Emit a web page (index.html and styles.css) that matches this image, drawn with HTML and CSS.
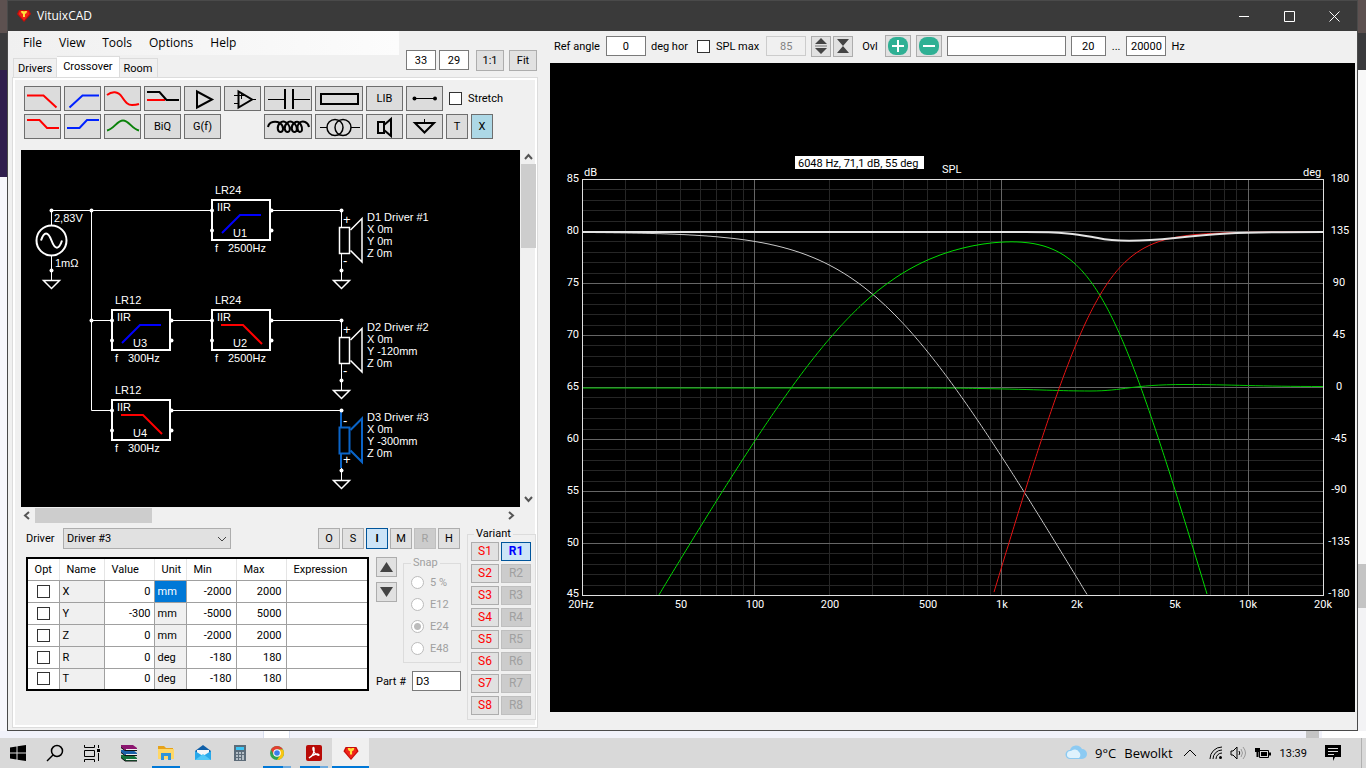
FILE: index.html
```html
<!DOCTYPE html>
<html lang="en">
<head>
  <meta charset="UTF-8" />
  <meta name="viewport" content="width=device-width, initial-scale=1.0" />
  <title>VituixCAD</title>
  <link rel="stylesheet" href="styles.css">
</head>
<body>
  <!-- shared shapes -->
  <svg class="defs" aria-hidden="true">
    <symbol id="gem" viewBox="0 0 14 12">
      <path d="M2 0H12L14 4L7 12L0 4Z" fill="#c80c08"/>
      <path d="M3 1H11L12.500 4L7 10.500L1.500 4Z" fill="#f0241a"/>
      <path d="M4 1H6.500L7 2L7.500 1H10L9.500 3L8 4V7H6V4L4.500 3Z" fill="#ffe23a"/>
    </symbol>
    <g id="ground" fill="none" stroke="#fff" stroke-width="1.500">
      <path d="M-8 0H8L0 8Z"/>
    </g>
    <g id="box">
      <rect x="0" y="0" width="58" height="40" fill="none" stroke="#fff" stroke-width="2"/>
      <g fill="#fff">
        <circle cx="0" cy="10.500" r="2"/><circle cx="0" cy="30.500" r="2"/>
        <circle cx="59.500" cy="10.500" r="2"/><circle cx="59.500" cy="30.500" r="2"/>
      </g>
    </g>
    <path id="highpass" d="M10 33L28 15H49" fill="none" stroke="#00f" stroke-width="2"/>
    <path id="lowpass" d="M9 15H31L50 34" fill="none" stroke="#f00" stroke-width="2"/>
    <g id="speaker" fill="none">
      <rect x="-2" y="17.500" width="10" height="26"/>
      <path d="M9 20L20.500 8.500V52L9 40.500"/>
    </g>
  </svg>

  <div class="desktop">
    <div class="edge edge-left"></div>
    <div class="window">
      <header class="titlebar">
        <svg class="app-icon"><use href="#gem"/></svg>
        <h1>VituixCAD</h1>
        <div class="caption-buttons">
          <button aria-label="Minimize"><svg width="11" height="11"><path d="M0 5.500H10"/></svg></button>
          <button aria-label="Maximize"><svg width="11" height="11"><path d="M.5 .5H10.500V10.500H.5Z"/></svg></button>
          <button aria-label="Close"><svg width="11" height="11"><path d="M.5 .5L10.500 10.500M10.500 .5L.5 10.500"/></svg></button>
        </div>
      </header>

      <div class="client">
        <section class="left">
          <nav class="menu">
            <a href="#">File</a><a href="#">View</a><a href="#">Tools</a><a href="#">Options</a><a href="#">Help</a>
          </nav>
          <div class="tab-row">
            <div class="tabs">
              <button>Drivers</button><button class="current">Crossover</button><button>Room</button>
            </div>
            <div class="grid-size">
              <input type="text" class="field center w30" value="33" aria-label="Columns">
              <input type="text" class="field center w30" value="29" aria-label="Rows">
              <button class="btn zoom">1:1</button>
              <button class="btn">Fit</button>
            </div>
          </div>

          <div class="panel">
            <div class="parts">
              <button aria-label="Low pass"><svg viewBox="0 0 35 23"><path stroke="#f00" d="M2 8.500H18.500L31.500 20.500"/></svg></button>
              <button aria-label="High pass"><svg viewBox="0 0 35 23"><path stroke="#02f" d="M4.500 20.500L17.500 8.500H34"/></svg></button>
              <button aria-label="Shelf"><svg viewBox="0 0 35 23"><path stroke="#f00" d="M2 8C7 4 13 4 17 10S23 18 27 18 31 18 34 17"/></svg></button>
              <button aria-label="Shelving low"><svg viewBox="0 0 35 23"><path stroke="#f00" d="M2 13H20"/><path d="M2 5H14.500L21.500 13H34"/></svg></button>
              <button aria-label="Buffer"><svg viewBox="0 0 35 23"><path d="M12 4.500V20.500L27 12.500Z"/></svg></button>
              <button aria-label="Op amp"><svg viewBox="0 0 35 23"><path d="M13.500 4.500V20.500L27 12.500Z"/><path class="thin" d="M9 8.500H19M9 16.500H14M27 12.500H31M16.500 6V12"/></svg></button>
              <button aria-label="Capacitor"><svg viewBox="0 0 46 23"><path d="M20 2V22M28 2V22"/><path class="thin" d="M3 12.500H20M28 12.500H45"/></svg></button>
              <button aria-label="Resistor"><svg viewBox="0 0 46 23"><path d="M5 7H42V17H5Z"/></svg></button>
              <button>LIB</button>
              <button aria-label="Wire"><svg viewBox="0 0 35 23"><path class="thin" d="M7 11.500H28"/><circle class="dot" cx="7.500" cy="11.500" r="2"/><circle class="dot" cx="28" cy="11.500" r="2"/></svg></button>
              <label class="check stretch"><input type="checkbox"> Stretch</label>

              <button aria-label="Low shelf"><svg viewBox="0 0 35 23"><path stroke="#f00" d="M2 5H14.500L22 13H34"/></svg></button>
              <button aria-label="High shelf"><svg viewBox="0 0 35 23"><path stroke="#02f" d="M2 13H14.500L22 5H34"/></svg></button>
              <button aria-label="Peak"><svg viewBox="0 0 35 23"><path stroke="#0a820a" d="M2 15.500C9 14 12 5.500 18 5.500S27 14 34 15.500"/></svg></button>
              <button>BiQ</button>
              <button>G(f)</button>
              <span></span>
              <button aria-label="Inductor"><svg viewBox="0 0 46 23"><path d="M3 12C4 6 11 6 15 8C20 12 18 17 15.500 17S11 12 15 8C18 5 21 7 23 9C26 13 25 17 22.500 17S18 12 22 8C25 5 28 7 30 9C33 13 32 17 29.500 17S25 12 29 8C33 5 35 8 36 10C38 14 37 17 35 17S31 12 34 8C38 5 43 7 44 12"/></svg></button>
              <button aria-label="Transformer"><svg viewBox="0 0 46 23"><g class="mid"><circle cx="19" cy="12.500" r="8"/><circle cx="27" cy="12.500" r="8"/></g><path class="thin" d="M4 12.500H11M35 12.500H44"/></svg></button>
              <button aria-label="Driver"><svg viewBox="0 0 35 23"><path d="M11 7H17V18H11ZM17 10L24 4V21L17 15"/></svg></button>
              <button aria-label="Ground"><svg viewBox="0 0 35 23"><path d="M8 8H27L17.500 17.500Z"/><path class="thin" d="M17.500 4V8"/></svg></button>
              <div class="pair"><button>T</button><button class="on">X</button></div>
            </div>

            <div class="scroller">
              <svg class="schematic" viewBox="21 150 499 357" preserveAspectRatio="xMinYMin slice">
                <g fill="none" stroke="#fff">
                  <path d="M51.500 225V210.500H212M91.500 210.500V410.500H112M91.500 320.500H112M171 320.500H212M271 210.500H341.500V227M271 320.500H341.500V337M171 410.500H341.500"/>
                  <path d="M51.500 256V280M341.500 254V280M341.500 364V390M341.500 465V480"/>
                </g>
                <g fill="none" stroke="#fff" stroke-width="2">
                  <circle cx="51.500" cy="240.500" r="15"/>
                  <path d="M41 240.500C44 231 48 231 51.500 240.500S59 250 62 240.500"/>
                </g>
                <g stroke="#fff" stroke-width="1.500">
                  <use href="#speaker" x="341.500" y="210"/>
                  <use href="#speaker" x="341.500" y="320"/>
                </g>
                <g fill="none" stroke="#0a64c8" stroke-width="2">
                  <path d="M341 412V427M341 454V468"/>
                  <use href="#speaker" x="341.500" y="410"/>
                </g>
                <use href="#ground" x="51.500" y="280.500"/>
                <use href="#ground" x="341.500" y="280.500"/>
                <use href="#ground" x="341.500" y="390.500"/>
                <use href="#ground" x="341.500" y="480.500"/>
                <g fill="#fff">
                  <circle cx="51.500" cy="210.500" r="2"/><circle cx="91.500" cy="210.500" r="2"/>
                  <circle cx="91.500" cy="320.500" r="2"/><circle cx="51.500" cy="270.500" r="2"/>
                  <circle cx="341.500" cy="210.500" r="2"/><circle cx="341.500" cy="270.500" r="2"/>
                  <circle cx="341.500" cy="320.500" r="2"/><circle cx="341.500" cy="380.500" r="2"/>
                  <circle cx="341.500" cy="410.500" r="2"/><circle cx="341.500" cy="470.500" r="2"/>
                </g>
                <use href="#box" x="212" y="200"/><use href="#highpass" x="212" y="200"/>
                <use href="#box" x="112" y="310"/><use href="#highpass" x="112" y="310"/>
                <use href="#box" x="212" y="310"/><use href="#lowpass" x="212" y="310"/>
                <use href="#box" x="112" y="400"/><use href="#lowpass" x="112" y="400"/>
                <g class="part-text">
                  <text x="54" y="222">2,83V</text><text x="55" y="267">1mΩ</text>
                  <text x="215" y="194">LR24</text><text x="217" y="211">IIR</text><text x="233" y="237">U1</text><text x="215" y="252">f</text><text x="228" y="252">2500Hz</text>
                  <text x="115" y="304">LR12</text><text x="117" y="321">IIR</text><text x="133" y="347">U3</text><text x="115" y="362">f</text><text x="128" y="362">300Hz</text>
                  <text x="215" y="304">LR24</text><text x="217" y="321">IIR</text><text x="233" y="347">U2</text><text x="215" y="362">f</text><text x="228" y="362">2500Hz</text>
                  <text x="115" y="394">LR12</text><text x="117" y="411">IIR</text><text x="133" y="437">U4</text><text x="115" y="452">f</text><text x="128" y="452">300Hz</text>
                  <text x="343" y="224" class="sign">+</text><text x="343" y="265" class="sign">-</text>
                  <text x="343" y="334" class="sign">+</text><text x="343" y="375" class="sign">-</text>
                  <text x="343" y="425" class="sign">-</text><text x="343" y="464" class="sign">+</text>
                  <text x="367" y="221">D1 Driver #1</text><text x="367" y="233">X 0m</text><text x="367" y="245">Y 0m</text><text x="367" y="257">Z 0m</text>
                  <text x="367" y="331">D2 Driver #2</text><text x="367" y="343">X 0m</text><text x="367" y="355">Y -120mm</text><text x="367" y="367">Z 0m</text>
                  <text x="367" y="421">D3 Driver #3</text><text x="367" y="433">X 0m</text><text x="367" y="445">Y -300mm</text><text x="367" y="457">Z 0m</text>
                </g>
              </svg>
              <div class="bar vertical">
                <svg width="15" height="14"><path d="M4 9L7.500 5L11 9"/></svg>
                <i></i>
                <svg width="15" height="15"><path d="M4 5L7.500 9L11 5"/></svg>
              </div>
              <div class="bar horizontal">
                <svg width="13" height="15"><path d="M8 4L4 7.500L8 11"/></svg>
                <i></i>
                <svg width="15" height="15"><path d="M4 4L8 7.500L4 11"/></svg>
              </div>
            </div>

            <div class="details">
              <div class="editor">
                <div class="driver-row">
                  <label for="driver">Driver</label>
                  <span class="combo">
                    <select id="driver"><option>Driver #3</option></select>
                    <svg width="10" height="6"><path d="M1 1L5 5L9 1"/></svg>
                  </span>
                  <div class="modes">
                    <button class="btn">O</button><button class="btn">S</button><button class="btn active">I</button><button class="btn">M</button><button class="btn" disabled>R</button><button class="btn">H</button>
                  </div>
                </div>
                <div class="editor-body">
                  <table>
                    <colgroup><col class="c-opt"><col class="c-name"><col class="c-value"><col class="c-unit"><col class="c-min"><col class="c-max"><col></colgroup>
                    <thead>
                      <tr><th>Opt</th><th>Name</th><th>Value</th><th>Unit</th><th>Min</th><th>Max</th><th>Expression</th></tr>
                    </thead>
                    <tbody>
                      <tr><td><input type="checkbox" aria-label="Optimize X"></td><td>X</td><td>0</td><td class="selected">mm</td><td>-2000</td><td>2000</td><td></td></tr>
                      <tr><td><input type="checkbox" aria-label="Optimize Y"></td><td>Y</td><td>-300</td><td>mm</td><td>-5000</td><td>5000</td><td></td></tr>
                      <tr><td><input type="checkbox" aria-label="Optimize Z"></td><td>Z</td><td>0</td><td>mm</td><td>-2000</td><td>2000</td><td></td></tr>
                      <tr><td><input type="checkbox" aria-label="Optimize R"></td><td>R</td><td>0</td><td>deg</td><td>-180</td><td>180</td><td></td></tr>
                      <tr><td><input type="checkbox" aria-label="Optimize T"></td><td>T</td><td>0</td><td>deg</td><td>-180</td><td>180</td><td></td></tr>
                    </tbody>
                  </table>
                  <div class="side">
                    <div class="side-top">
                      <div class="arrows">
                        <button class="btn" aria-label="Increase"><svg width="15" height="12"><path d="M7.500 1L14 11H1Z"/></svg></button>
                        <button class="btn" aria-label="Decrease"><svg width="15" height="12"><path d="M1 1H14L7.500 11Z"/></svg></button>
                      </div>
                      <fieldset class="snap" disabled>
                        <legend>Snap</legend>
                        <label><input type="radio" name="snap"> 5 %</label>
                        <label><input type="radio" name="snap"> E12</label>
                        <label><input type="radio" name="snap" checked> E24</label>
                        <label><input type="radio" name="snap"> E48</label>
                      </fieldset>
                    </div>
                    <div class="part-row">
                      <label for="part">Part #</label>
                      <input type="text" class="field" id="part" value="D3">
                    </div>
                  </div>
                </div>
              </div>
              <fieldset class="variant">
                <legend>Variant</legend>
                <div class="variant-grid">
                  <button class="btn">S1</button><button class="btn active">R1</button>
                  <button class="btn">S2</button><button class="btn" disabled>R2</button>
                  <button class="btn">S3</button><button class="btn" disabled>R3</button>
                  <button class="btn">S4</button><button class="btn" disabled>R4</button>
                  <button class="btn">S5</button><button class="btn" disabled>R5</button>
                  <button class="btn">S6</button><button class="btn" disabled>R6</button>
                  <button class="btn">S7</button><button class="btn" disabled>R7</button>
                  <button class="btn">S8</button><button class="btn" disabled>R8</button>
                </div>
              </fieldset>
            </div>
          </div>
        </section>

        <section class="right">
          <div class="chart-tools">
            <label for="angle">Ref angle</label>
            <input type="text" class="field center w40" id="angle" value="0">
            <span class="unit">deg hor</span>
            <label class="check"><input type="checkbox"> SPL max</label>
            <input type="text" class="field center w40 spl" value="85" aria-label="SPL max" disabled>
            <button class="btn spin" aria-label="Expand"><svg width="14" height="16"><path d="M7 0L13 6H1ZM1 10H13L7 16Z"/><path d="M1 7h12v2H1Z" opacity=".35"/></svg></button>
            <button class="btn spin" aria-label="Compress"><svg width="14" height="16"><path d="M1 1H13L7 8L13 15H1L7 8Z"/></svg></button>
            <label class="ovl" for="overlay">Ovl</label>
            <button class="btn round" aria-label="Add overlay"><svg width="20" height="20"><rect width="20" height="18" y="1" rx="8"/><path d="M10 4V16M4 10H16"/></svg></button>
            <button class="btn round" aria-label="Remove overlay"><svg width="20" height="20"><rect width="20" height="18" y="1" rx="8"/><path d="M4 10H16"/></svg></button>
            <input type="text" class="field overlay" id="overlay">
            <input type="text" class="field center from" value="20" aria-label="From">
            <span class="dots">...</span>
            <input type="text" class="field center w40" id="to" value="20000">
            <label for="to">Hz</label>
          </div>

          <svg class="chart" viewBox="0 0 805 649">
            <g id="grid"></g>
            <g id="curves" fill="none">
              <path stroke="#00c800" d="M33 325H350C390 325 410 325 430 325.500C490 326.500 510 328 540 328C575 328 580 321.500 635 321.500C680 321.500 710 323.500 773 323.500"/>
            </g>
            <path fill="none" stroke="#e4e4e4" stroke-width="2" d="M33 169H475C520 169 530 172 548 175C566 179 595 178 625 175C660 171 680 169 773 169"/>
            <rect x="245" y="93" width="129" height="13" fill="#fff"/>
            <text x="248" y="104" class="tip">6048 Hz, 71,1 dB, 55 deg</text>
            <g class="chart-text">
              <text x="392" y="110">SPL</text><text x="34" y="113">dB</text><text x="753" y="113">deg</text>
            </g>
            <g class="chart-text end">
              <text x="29" y="119">85</text><text x="29" y="171">80</text><text x="29" y="223">75</text>
              <text x="29" y="275">70</text><text x="29" y="327">65</text><text x="29" y="379">60</text>
              <text x="29" y="431">55</text><text x="29" y="483">50</text><text x="29" y="534">45</text>
            </g>
            <g class="chart-text middle">
              <text x="790" y="119">180</text><text x="790" y="171">135</text><text x="789" y="223">90</text>
              <text x="789" y="275">45</text><text x="789" y="327">0</text><text x="789" y="379">-45</text>
              <text x="789" y="430">-90</text><text x="789" y="482">-135</text><text x="789" y="534">-180</text>
              <text x="31" y="545">20Hz</text><text x="131" y="545">50</text><text x="205" y="545">100</text>
              <text x="280" y="545">200</text><text x="378" y="545">500</text><text x="452" y="545">1k</text>
              <text x="527" y="545">2k</text><text x="625" y="545">5k</text><text x="698" y="545">10k</text>
              <text x="773" y="545">20k</text>
            </g>
          </svg>
        </section>
      </div>
    </div>
    <div class="edge edge-right"></div>
  </div>
  <div class="edge-bottom"><span></span><i></i><b></b></div>

  <footer class="taskbar">
    <div class="apps">
      <button aria-label="Start"><svg width="18" height="18"><path d="M1 3.500L7.500 2.500V8.500H1ZM8.500 2.300L17 1V8.500H8.500ZM1 9.500H7.500V15.500L1 14.500ZM8.500 9.500H17V17L8.500 15.700Z"/></svg></button>
      <button aria-label="Search"><svg width="18" height="18" fill="none" stroke="#000" stroke-width="1.500"><circle cx="11" cy="7" r="5.500"/><path d="M7 11L1 17"/></svg></button>
      <button aria-label="Task view"><svg width="18" height="18" fill="none" stroke="#000"><path d="M1.500 1V3.500H11.500V1M1.500 6.500H11.500V12.500H1.500ZM1.500 18V15.500H11.500V18M15.500 1V4M15.500 9V17"/><path d="M14 6.500H17" stroke-width="3"/></svg></button>
      <button aria-label="WinRAR"><svg width="18" height="18"><path d="M1 1L13 1L17 4V6L5 6L1 4Z" fill="#8c1670"/><path d="M1 6L13 6L17 9V11L5 11L1 9Z" fill="#1a62a8"/><path d="M1 11L13 11L17 14V17H5L1 14Z" fill="#14733c"/><path d="M6 5.500H17M6 10.500H17M6 15.500H17" stroke="#eee"/><path d="M1 3.500L5 6.500H17M1 8.500L5 11.500H17M1 13.500L5 17H17" fill="none" stroke="#111"/></svg></button>
      <button class="open" aria-label="File Explorer"><svg width="18" height="18"><path d="M1 2H7L9 4H16V15H1Z" fill="#e6a21a"/><path d="M1 5H17V15H1Z" fill="#ffd766"/><path d="M4 16V9H14V16H11V12H7V16Z" fill="#2f94dc"/></svg></button>
      <button aria-label="Mail"><svg width="18" height="18"><path d="M1 7L9 1L17 7V16H1Z" fill="#0f5fa8"/><path d="M3 6H15V11H3Z" fill="#f4f6f8"/><path d="M1 7L9 12L17 7V16H1Z" fill="#28a8ea"/><path d="M1 16L9 10L17 16Z" fill="#50c8f8"/></svg></button>
      <button aria-label="Calculator"><svg width="18" height="18"><path d="M3 1H15V17H3Z" fill="#5c6b78"/><path d="M5 3H13V6H5Z" fill="#3cc4f4"/><path d="M5 8h2v2H5zM8 8h2v2H8zM11 8h2v2h-2zM5 11h2v2H5zM8 11h2v2H8zM11 11h2v5h-2zM5 14h2v2H5zM8 14h2v2H8z" fill="#b4bec6"/></svg></button>
      <button class="open multi" aria-label="Chrome"><svg width="18" height="18"><circle cx="9" cy="9" r="7" fill="#30a350"/><path d="M3 5.500A7 7 0 0 1 15 5.500H9L5.800 11Z" fill="#e23f31"/><path d="M15 5.500A7 7 0 0 1 9 16L12.200 11L11 5.500Z" fill="#fbc510"/><circle cx="9" cy="9" r="3.800" fill="#fff"/><circle cx="9" cy="9" r="2.800" fill="#3b7fea"/></svg></button>
      <button class="open multi" aria-label="Acrobat"><svg width="18" height="18"><rect x="1" y="1" width="16" height="16" rx="2" fill="#b80a06"/><path d="M4 14C7 13 10 8 9 4C8 2 7 5 9 8S14 12 14 11C14 9 8 10 4 14Z" fill="none" stroke="#fff" stroke-width="1.300"/></svg></button>
      <button class="open current" aria-label="VituixCAD"><svg width="16" height="13"><use href="#gem"/></svg></button>
    </div>
    <div class="tray">
      <svg class="cloud" width="22" height="18"><path d="M5 15A4.500 4.500 0 0 1 5 6A6.500 6.500 0 0 1 17 5A5 5 0 0 1 17 15Z" fill="#8ccaf2"/><path d="M5 14A3.500 3.500 0 0 1 6 7A5 5 0 0 1 14 8A4 4 0 0 1 14 14Z" fill="#dff2fd"/></svg>
      <span class="weather">9°C</span><span class="weather">Bewolkt</span>
      <svg class="caret" width="14" height="8"><path d="M1 7L7 1L13 7"/></svg>
      <svg class="wifi" width="14" height="14"><path d="M1 13A12 12 0 0 1 13 1M4 13A9 9 0 0 1 13 4M7 13A6 6 0 0 1 13 7"/><circle cx="11.500" cy="11.500" r="1.500" fill="#000"/></svg>
      <svg class="volume" width="17" height="14"><path d="M1 5H3L7 1V13L3 9H1ZM9 5Q10.500 7 9 9"/><path class="faint" d="M11 3Q14 7 11 11M13 1Q18 7 13 13"/></svg>
      <svg class="battery" width="17" height="14"><path d="M5.500 4.500H14.500V11.500H5.500Z"/><path class="solid" d="M7 6H13V10H7ZM15 6.500H17V9.500H15ZM1 2H6V6H4.500V11H2.500V6H1Z"/></svg>
      <time>13:39</time>
      <svg class="notice" width="16" height="16"><path d="M0 0H16V12H10L8 16V12H0Z"/><path d="M3 3.500H13M3 6.500H13M3 9.500H9" stroke="#ddd"/></svg>
    </div>
  </footer>
  <script src="chart.js"></script>
</body>
</html>
```
FILE: styles.css
```css
* {
  box-sizing: border-box;
}

:root {
  --face: #f0f0f0;
  --line: #dcdcdc;
  --btn: #e1e1e1;
  --btn-line: #adadad;
  --field-line: #7a7a7a;
  --accent: #0078d7;
}

body {
  margin: 0;
  height: 100vh;
  display: flex;
  flex-direction: column;
  overflow: hidden;
  background: #f4f5fb;
  color: #000;
  font-family: Roboto, "Liberation Sans", sans-serif;
  font-size: 11px;
  line-height: 13px;
}

button, input, select {
  font: inherit;
  color: inherit;
  margin: 0;
  padding: 0;
  border-radius: 0;
}

button {
  display: flex;
  align-items: center;
  justify-content: center;
}

svg {
  display: block;
  flex: none;
}

.defs {
  position: absolute;
  width: 0;
  height: 0;
}

/* what shows around the window */
.desktop {
  flex: 1;
  min-height: 0;
  display: flex;
}

.edge {
  width: 8px;
  background: linear-gradient(#5d5150 33px, #3a3a3c 33px 70px, #301e4e 70px 177px, #f7f7fc 177px);
}

.edge-left {
  width: 7px;
}

.edge-right {
  background: linear-gradient(#5d5150 33px, #3a3a3c 33px 70px, #f8f8f8 70px 564px, #c4c4c4 564px 608px, #f3f3f5 608px);
}

.edge-bottom {
  height: 7px;
  display: flex;
  background: #f1f2fa;
}

.edge-bottom span {
  width: 27px;
  margin-left: 263px;
  background: #fff;
  border: solid #d8deee;
  border-width: 0 1px;
}

.edge-bottom i {
  width: 13px;
  margin-left: auto;
  background: #c4c4c4;
}

.edge-bottom b {
  width: 44px;
  margin-left: 3px;
  background: #fff;
}

.window {
  flex: 1;
  display: flex;
  flex-direction: column;
  min-width: 0;
  border: 1px solid #4a4a4a;
  background: var(--face);
}

.titlebar {
  height: 30px;
  display: flex;
  align-items: center;
  padding-left: 9px;
  background: #3a3a3a;
  color: #fff;
}

.app-icon {
  width: 14px;
  height: 12px;
}

h1 {
  margin: 0 auto 0 6px;
  font: 12px/16px "Open Sans", sans-serif;
}

.caption-buttons {
  display: flex;
  align-self: stretch;
}

.caption-buttons button {
  width: 45px;
  border: 0;
  background: none;
}

.caption-buttons path {
  fill: none;
  stroke: #fff;
}

.client {
  flex: 1;
  min-height: 0;
  display: grid;
  grid-template-columns: 542px minmax(0, 1fr);
}

/* left side */
.left {
  display: flex;
  flex-direction: column;
  min-height: 0;
  padding: 0 12px 2px 4px;
}

.menu {
  height: 24px;
  width: 390px;
  margin-left: -3px;
  padding-left: 14px;
  display: flex;
  align-items: center;
  gap: 17px;
  background: linear-gradient(to right, var(--face), #fcfcfc);
  font: 12px/16px "Open Sans", sans-serif;
}

.menu a {
  color: #000;
  text-decoration: none;
}

.tab-row {
  height: 22px;
  display: flex;
  justify-content: space-between;
  align-items: flex-end;
}

.tabs {
  display: flex;
  align-items: flex-end;
  padding-left: 1px;
}

.tabs button {
  height: 19px;
  padding: 0 4px;
  border: 1px solid var(--line);
  border-width: 1px 1px 0 0;
  background: var(--face);
}

.tabs button:first-child {
  border-left-width: 1px;
}

.tabs .current {
  height: 21px;
  padding: 0 6px 2px;
  background: #fff;
}

.grid-size {
  display: flex;
  align-items: center;
  gap: 3px;
  height: 22px;
  margin: 0 1px 6px 0;
}

.grid-size .btn {
  width: 28px;
  height: 21px;
  margin-left: 2px;
}

.grid-size .zoom {
  margin-left: 4px;
}

.field {
  height: 20px;
  padding: 0 3px;
  border: 1px solid var(--field-line);
  background: #fff;
}

.field:disabled {
  border-color: #ccc;
  background: var(--face);
  color: #838383;
}

.center {
  text-align: center;
}

.w30 {
  width: 30px;
}

.w40 {
  width: 40px;
}

.btn {
  border: 1px solid var(--btn-line);
  background: var(--btn);
}

.btn:disabled {
  border-color: #bfbfbf;
  background: #ccc;
  color: #a0a0a0;
}

.btn.active {
  border-color: #00559b;
  background: #cce4f7;
  font-weight: bold;
}

.panel {
  flex: 1;
  min-height: 0;
  display: flex;
  flex-direction: column;
  border: 1px solid var(--line);
  box-shadow: inset 0 0 0 2px #fff;
  padding: 8px 1px 2px 8px;
}

.parts {
  display: grid;
  grid-template-columns: repeat(6, 37px) 48px 48px 37px 37px 1fr;
  grid-auto-rows: 25px;
  gap: 3px;
  padding: 0 0 11px 3px;
}

.parts button {
  border: 1px solid #6e6e6e;
  background: #dcdcdc;
}

.parts svg {
  height: 23px;
  fill: none;
  stroke: #000;
  stroke-width: 2;
}

.parts .thin {
  stroke-width: 1;
}

.parts .mid {
  stroke-width: 1.5;
}

.parts .dot {
  fill: #000;
  stroke: none;
}

.parts .pair {
  display: flex;
  gap: 3px;
}

.pair button {
  width: 22px;
}

.parts .on {
  background: #add8e6;
}

.check {
  display: flex;
  align-items: center;
  gap: 6px;
}

.stretch {
  padding-left: 3px;
}

input[type="checkbox"] {
  appearance: none;
  width: 13px;
  height: 13px;
  border: 1px solid #333;
  background: #fff;
}

/* schematic with its scroll bars */
.scroller {
  flex: 1;
  min-height: 0;
  display: grid;
  grid-template: minmax(0, 1fr) 16px / minmax(0, 1fr) 16px;
}

.schematic {
  width: 100%;
  height: 100%;
  background: #000;
}

.part-text {
  fill: #fff;
  font: 11px "Liberation Sans", Arial, sans-serif;
}

.sign {
  font-size: 13px;
}

.bar {
  display: flex;
}

.bar path {
  fill: none;
  stroke: #555;
  stroke-width: 2;
}

.bar i {
  background: #cdcdcd;
}

.vertical {
  flex-direction: column;
  padding-left: 1px;
}

.vertical i {
  height: 84px;
  margin-bottom: auto;
}

.horizontal {
  padding-top: 1px;
}

.horizontal i {
  width: 117px;
  margin: 0 auto 0 1px;
}

.details {
  display: flex;
  justify-content: space-between;
  align-items: flex-start;
  padding: 5px 0 5px 5px;
}

.driver-row {
  display: flex;
  align-items: center;
  height: 21px;
}

.driver-row label {
  width: 37px;
}

.combo {
  display: grid;
  align-items: center;
}

.combo > * {
  grid-area: 1 / 1;
}

.combo select {
  appearance: none;
  width: 168px;
  height: 21px;
  padding: 0 3px;
  border: 1px solid var(--btn-line);
  background: var(--btn);
}

.combo svg {
  justify-self: end;
  margin-right: 4px;
  fill: none;
  stroke: #444;
  pointer-events: none;
}

.modes {
  display: flex;
  gap: 2px;
  margin: 0 1px 0 auto;
}

.modes .btn {
  width: 22px;
  height: 21px;
}

.editor-body {
  display: flex;
  gap: 7px;
  margin-top: 8px;
}

table {
  width: 343px;
  table-layout: fixed;
  border-collapse: collapse;
  border: 2px solid #000;
  background: #fff;
}

.c-opt { width: 32px; }
.c-name { width: 45px; }
.c-value { width: 50px; }
.c-unit { width: 32px; }
.c-min { width: 50px; }
.c-max { width: 50px; }

th, td {
  height: 22px;
  padding: 0 3px;
  border: 1px solid #a0a0a0;
  font-weight: normal;
  text-align: right;
}

th {
  border-color: #e5e5e5;
  border-bottom-color: #a0a0a0;
  padding: 0 7px;
  text-align: left;
}

th:first-child,
td:first-child {
  text-align: center;
  padding: 0;
}

th:nth-child(5),
th:nth-child(6),
td:nth-child(5),
td:nth-child(6) {
  padding-right: 4px;
}

td:nth-child(2),
td:nth-child(4) {
  background: var(--face);
  text-align: left;
}

td input {
  display: block;
  margin: 0 auto;
}

td.selected:nth-child(4) {
  background: var(--accent);
  color: #fff;
}

.side {
  display: flex;
  flex-direction: column;
  justify-content: space-between;
}

.side-top {
  display: flex;
  gap: 6px;
}

.arrows {
  display: flex;
  flex-direction: column;
  gap: 5px;
}

.arrows .btn {
  width: 21px;
  height: 20px;
}

.arrows path,
.spin path {
  fill: #444;
}

fieldset {
  margin: 0;
  min-width: 0;
  border: 1px solid var(--line);
}

legend {
  padding: 0 2px;
  line-height: 12px;
}

.snap {
  width: 58px;
  padding: 2px 3px 3px 7px;
  color: #a0a0a0;
}

.snap label {
  display: flex;
  align-items: center;
  gap: 6px;
  height: 22px;
}

input[type="radio"] {
  appearance: none;
  width: 13px;
  height: 13px;
  border: 1px solid #bcbcbc;
  border-radius: 50%;
  background: #fff;
}

input[type="radio"]:checked {
  background: radial-gradient(#bcbcbc 3px, #fff 4px);
}

.part-row {
  display: flex;
  align-items: center;
  justify-content: space-between;
}

.part-row .field {
  width: 49px;
}

.variant {
  width: 69px;
  padding: 2px 4px 4px 3px;
}

.variant legend {
  margin-left: 3px;
}

.variant-grid {
  display: grid;
  grid-template-columns: 28px 30px;
  grid-auto-rows: 19px;
  gap: 3px 2px;
}

.variant-grid .btn {
  font-size: 12px;
}

.variant-grid .btn:nth-child(odd) {
  color: #f00;
}

.variant-grid .active {
  color: #00f;
}

/* right side */
.right {
  display: flex;
  flex-direction: column;
  min-width: 0;
  min-height: 0;
  padding: 0 2px 18px 0;
}

.chart-tools {
  height: 32px;
  display: flex;
  align-items: center;
  gap: 5px;
  padding: 0 0 2px 4px;
}

.chart-tools label,
.chart-tools span {
  white-space: nowrap;
}

#angle {
  margin-left: 1px;
}

.unit {
  margin-right: 4px;
}

.chart-tools .spl {
  margin-left: 2px;
}

.spin {
  width: 20px;
  height: 21px;
  margin-right: -3px;
}

.chart-tools .ovl {
  margin: 0 2px 0 7px;
}

.round {
  width: 26px;
  height: 22px;
}

.round rect {
  fill: #2fb094;
}

.round path {
  stroke: #fff;
  stroke-width: 2;
}

.overlay {
  width: 119px;
}

.from {
  width: 35px;
}

.dots {
  margin: 0 1px;
}

.chart {
  flex: 1;
  min-height: 0;
  width: 100%;
  background: #000;
}

.chart-text {
  fill: #fff;
}

.tip {
  fill: #000;
}

.end {
  text-anchor: end;
}

.middle {
  text-anchor: middle;
}

.minor {
  stroke: #262626;
}

.major {
  stroke: #666;
}

.frame {
  fill: none;
  stroke: #e0e0e0;
}

/* taskbar */
.taskbar {
  height: 30px;
  display: flex;
  justify-content: space-between;
  background: #d9d9d9;
}

.apps,
.tray {
  display: flex;
  align-items: center;
}

.apps button {
  width: 37px;
  height: 30px;
  border: 0;
  background: none;
}

.apps button:first-child {
  width: 36px;
}

.apps .open {
  background: linear-gradient(var(--accent), var(--accent)) center bottom / 28px 2px no-repeat;
}

.apps .multi {
  background-image: linear-gradient(to right, var(--accent) 20px, #6fabde 20px);
}

.apps .current {
  background-color: #f0f0f0;
  background-size: 100% 2px;
}

.tray {
  margin-right: 4px;
  padding-right: 20px;
  height: 30px;
  border-right: 1px solid #b0b0b0;
}

.weather {
  margin-left: 8px;
  font: 13px/18px "Open Sans", sans-serif;
}

.caret {
  margin: 0 12px 0 10px;
}

.caret path,
.wifi path,
.volume path,
.battery path {
  fill: none;
  stroke: #000;
}

.volume .faint {
  stroke: #999;
}

.battery .solid {
  fill: #000;
  stroke: none;
}

.volume,
.battery {
  margin-left: 7px;
}

time {
  margin: 0 18px 0 9px;
}
```
FILE: chart.js
```js
const NS = 'http://www.w3.org/2000/svg';
const left = 33, top_ = 116, width = 740, height = 416;

const xOf = f => left + Math.log10(f / 20) / 3 * width;
const yOf = db => top_ + (85 - db) / 40 * height;

function add(parent, tag, attrs) {
  const el = document.createElementNS(NS, tag);
  for (const name in attrs) el.setAttribute(name, attrs[name]);
  document.getElementById(parent).appendChild(el);
}

// grid: 1 dB steps, log decades
const lines = { minor: '', major: '' };
for (let db = 84; db > 45; db--) {
  const y = Math.round(yOf(db)) + 0.5;
  lines[db % 5 ? 'minor' : 'major'] += `M${left} ${y}h${width}`;
}
for (const decade of [10, 100, 1000, 10000]) {
  for (let n = 1; n < 10; n++) {
    const f = decade * n;
    if (f <= 20 || f >= 20000) continue;
    const x = Math.round(xOf(f)) - 0.5;
    lines[n === 1 ? 'major' : 'minor'] += `M${x} ${top_}v${height}`;
  }
}
add('grid', 'path', { class: 'minor', d: lines.minor });
add('grid', 'path', { class: 'major', d: lines.major });
add('grid', 'rect', { class: 'frame', x: left - 0.5, y: top_ + 0.5, width: width + 1, height: height });

// Linkwitz-Riley slopes, level in dB
const lp = (f, fc, n) => -20 * Math.log10(1 + (f / fc) ** n);
const hp = (f, fc, n) => -20 * Math.log10(1 + (fc / f) ** n);

function curve(color, level) {
  const points = [];
  for (let x = 0; x <= width; x++) {
    const f = 20 * 10 ** (x / width * 3);
    const db = 79.9 + level(f);
    if (db >= 45) points.push(`${left + x} ${yOf(db).toFixed(1)}`);
  }
  add('curves', 'path', { stroke: color, d: 'M' + points.join('L') });
}

curve('#c8c8c8', f => lp(f, 300, 2));
curve('#00dc00', f => hp(f, 300, 2) + lp(f, 2500, 4));
curve('#e61414', f => hp(f, 2500, 4));
```
